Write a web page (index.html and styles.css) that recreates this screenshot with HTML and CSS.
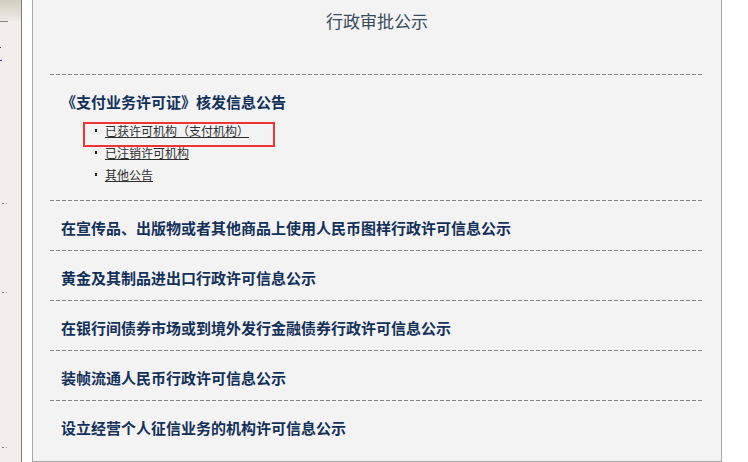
FILE: index.html
```html
<!DOCTYPE html>
<html lang="zh-CN">

<head>
    <meta charset="UTF-8">
    <meta name="viewport" content="width=device-width, initial-scale=1.0">
    <title>行政审批公示</title>
    <link rel="stylesheet" href="styles.css">
</head>

<body>
    <div class="side">
        <div class="side-top"></div>
        <div class="side-line"></div>
        <span class="side-mark mark-a"></span>
        <span class="side-mark mark-b"></span>
        <span class="side-dots dots-a"></span>
        <span class="side-dots dots-b"></span>
        <span class="side-dots dots-c"></span>
    </div>

    <div class="panel">
        <h2 class="title">行政审批公示</h2>

        <div class="list">
            <div class="item">
                <h3><a href="#">《支付业务许可证》核发信息公告</a></h3>
                <ul class="sub">
                    <li class="marked"><a href="#">已获许可机构（支付机构）</a></li>
                    <li><a href="#">已注销许可机构</a></li>
                    <li><a href="#">其他公告</a></li>
                </ul>
            </div>
            <div class="item">
                <h3><a href="#">在宣传品、出版物或者其他商品上使用人民币图样行政许可信息公示</a></h3>
            </div>
            <div class="item">
                <h3><a href="#">黄金及其制品进出口行政许可信息公示</a></h3>
            </div>
            <div class="item">
                <h3><a href="#">在银行间债券市场或到境外发行金融债券行政许可信息公示</a></h3>
            </div>
            <div class="item">
                <h3><a href="#">装帧流通人民币行政许可信息公示</a></h3>
            </div>
            <div class="item">
                <h3><a href="#">设立经营个人征信业务的机构许可信息公示</a></h3>
            </div>
        </div>
    </div>
</body>

</html>
```

FILE: styles.css
```css
* {
    margin: 0;
    padding: 0;
    box-sizing: border-box;
}

body {
    display: flex;
    height: 462px;
    overflow: hidden;
    background-color: #fff;
    font-family: "Noto Sans CJK SC", "Liberation Sans", sans-serif;
}

a {
    color: inherit;
}

/* left menu strip, mostly cut off */
.side {
    width: 22px;
    flex-shrink: 0;
    background-color: #f0efec;
    border-right: 1px solid #857d69;
}

.side-top {
    height: 21px;
    background: linear-gradient(#d3cec1, #ecebe6);
}

.side-line {
    width: 8px;
    height: 1px;
    background-color: #8a8472;
}

.side-mark,
.side-dots {
    display: block;
    height: 1px;
}

.side-mark {
    background-color: #1f3f6e;
}

.mark-a {
    width: 1px;
    margin-top: 25px;
}

.mark-b {
    width: 2px;
    margin-top: 12px;
}

.side-dots {
    width: 6px;
    margin-left: 2px;
    background: linear-gradient(to right, #777 0 2px, transparent 2px 4px, #999 4px 5px, transparent 5px);
}

.dots-a {
    margin-top: 142px;
}

.dots-b {
    margin-top: 88px;
}

.dots-c {
    margin-top: 154px;
}

/* main panel */
.panel {
    width: 690px;
    height: 462px;
    margin-left: 10px;
    padding-top: 10px;
    background-color: #f3f3f3;
    border: 1px solid #a8a8a8;
    border-top: none;
}

.title {
    font-size: 17px;
    font-weight: normal;
    line-height: 21px;
    text-align: center;
    color: #3a4b5c;
}

.list {
    margin: 43px 17px 0 17px;
}

.item {
    padding: 18px 0 12px 11px;
    background: repeating-linear-gradient(to right, #878787 0 4px, transparent 4px 6px) top left / 100% 1px no-repeat;
}

.item h3 {
    font-size: 15px;
    font-weight: bold;
    line-height: 20px;
    color: #13305a;
}

.item h3 a {
    text-decoration: none;
}

.sub {
    list-style: none;
    margin: 8px 0 2px 22px;
}

.sub li {
    position: relative;
    padding-left: 12px;
    font-size: 12px;
    line-height: 22px;
    color: #2e2e2e;
}

.sub li::before {
    content: "";
    position: absolute;
    left: 12px;
    top: 9px;
    width: 2px;
    height: 3px;
    background-color: #222;
}

.sub li a {
    margin-left: 10px;
}

/* red highlight box drawn over the first entry */
.sub li.marked::after {
    content: "";
    position: absolute;
    left: 0;
    top: 2px;
    width: 188px;
    height: 21px;
    border: 2px solid #ee3535;
}
```
